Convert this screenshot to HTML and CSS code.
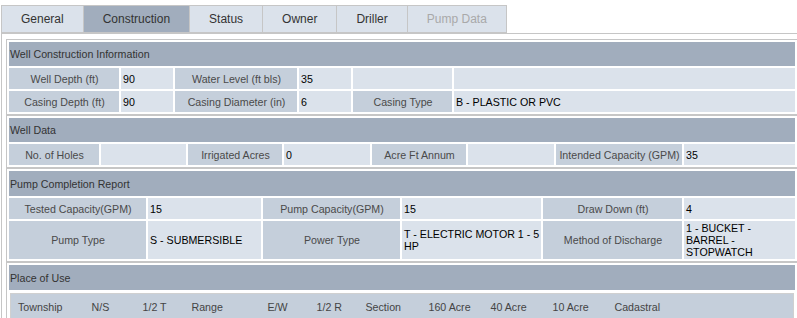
FILE: index.html
```html
<!DOCTYPE html>
<html lang="en">
<head>
    <meta charset="UTF-8">
    <meta name="viewport" content="width=device-width, initial-scale=1.0">
    <title>Well Construction</title>
    <link rel="stylesheet" href="styles.css">
</head>
<body>

<div class="tabs">
    <span class="tab">General</span>
    <span class="tab active">Construction</span>
    <span class="tab">Status</span>
    <span class="tab">Owner</span>
    <span class="tab">Driller</span>
    <span class="tab disabled">Pump Data</span>
</div>

<div class="panel">
    <table class="sect s1">
        <colgroup><col><col><col><col><col><col></colgroup>
        <tr><th class="head" colspan="6">Well Construction Information</th></tr>
        <tr>
            <td class="lbl">Well Depth (ft)</td><td class="val">90</td>
            <td class="lbl">Water Level (ft bls)</td><td class="val">35</td>
            <td class="val"></td><td class="val"></td>
        </tr>
        <tr>
            <td class="lbl">Casing Depth (ft)</td><td class="val">90</td>
            <td class="lbl">Casing Diameter (in)</td><td class="val">6</td>
            <td class="lbl">Casing Type</td><td class="val">B - PLASTIC OR PVC</td>
        </tr>
    </table>

    <table class="sect s2">
        <colgroup><col><col><col><col><col><col><col><col></colgroup>
        <tr><th class="head" colspan="8">Well Data</th></tr>
        <tr>
            <td class="lbl">No. of Holes</td><td class="val"></td>
            <td class="lbl">Irrigated Acres</td><td class="val">0</td>
            <td class="lbl">Acre Ft Annum</td><td class="val"></td>
            <td class="lbl">Intended Capacity (GPM)</td><td class="val">35</td>
        </tr>
    </table>

    <table class="sect s3">
        <colgroup><col><col><col><col><col><col></colgroup>
        <tr><th class="head" colspan="6">Pump Completion Report</th></tr>
        <tr>
            <td class="lbl">Tested Capacity(GPM)</td><td class="val">15</td>
            <td class="lbl">Pump Capacity(GPM)</td><td class="val">15</td>
            <td class="lbl">Draw Down (ft)</td><td class="val">4</td>
        </tr>
        <tr class="tall">
            <td class="lbl">Pump Type</td><td class="val">S - SUBMERSIBLE</td>
            <td class="lbl">Power Type</td><td class="val">T - ELECTRIC MOTOR 1 - 5 HP</td>
            <td class="lbl">Method of Discharge</td><td class="val">1 - BUCKET - BARREL - STOPWATCH</td>
        </tr>
    </table>

    <table class="sect s4">
        <tr><th class="head">Place of Use</th></tr>
        <tr>
            <td class="nest">
                <table class="use">
                    <colgroup><col><col><col><col><col><col><col><col><col><col><col></colgroup>
                    <tr>
                        <th>Township</th><th>N/S</th><th>1/2 T</th><th>Range</th><th>E/W</th><th>1/2 R</th>
                        <th>Section</th><th>160 Acre</th><th>40 Acre</th><th>10 Acre</th><th>Cadastral</th>
                    </tr>
                </table>
            </td>
        </tr>
    </table>
</div>

</body>
</html>
```

FILE: styles.css
```css
html, body {
    overflow: hidden;
}
body {
    margin: 0;
    padding: 5px 0 0 1px;
    font-family: "Liberation Sans", Arial, sans-serif;
    background-color: #fff;
    color: #333;
}

/* tabs */
.tabs {
    display: flex;
}
.tab {
    height: 26px;
    line-height: 26px;
    padding: 0 19px;
    font-size: 12px;
    color: #333;
    background-color: #dbe2eb;
    border: 1px solid #c6c6c6;
    border-left: none;
}
.tab:first-child {
    border-left: 1px solid #c6c6c6;
}
.tab.active {
    background-color: #a1adbd;
}
.tab.disabled {
    color: #a9a9a9;
}

/* panel */
.panel {
    width: 830px;
    padding: 5px 0 0 4px;
    border-top: 1px solid #c6c6c6;
    border-left: 1px solid #c6c6c6;
}
.sect {
    width: 792px;
    table-layout: fixed;
    border: 1px solid #c6c6c6;
    border-spacing: 2px;
    font-size: 8pt;
    line-height: 12px;
}
.sect td, .sect th {
    padding: 0 1px 0 2px;
    height: 21px;
    vertical-align: middle;
}
.sect .head {
    height: 24px;
    padding: 0 1px;
    text-align: left;
    font-weight: normal;
    color: #333;
    background-color: #a1adbd;
}
.s3 .head, .s4 .head {
    height: 25px;
}
.sect .tall td {
    height: 38px;
}
.lbl {
    text-align: center;
    color: #4a4a4a;
    background-color: #c5cfdb;
}
.val {
    color: #000;
    background-color: #dbe2eb;
}

/* column widths */
.s1 col:nth-child(1) { width: 110px; }
.s1 col:nth-child(2) { width: 52px; }
.s1 col:nth-child(3) { width: 122px; }
.s1 col:nth-child(4) { width: 52px; }
.s1 col:nth-child(5) { width: 99px; }

.s2 col:nth-child(1) { width: 90px; }
.s2 col:nth-child(2) { width: 85px; }
.s2 col:nth-child(3) { width: 94px; }
.s2 col:nth-child(4) { width: 86px; }
.s2 col:nth-child(5) { width: 94px; }
.s2 col:nth-child(6) { width: 86px; }
.s2 col:nth-child(7) { width: 126px; }

.s3 col:nth-child(1) { width: 137px; }
.s3 col:nth-child(2) { width: 113px; }
.s3 col:nth-child(3) { width: 137px; }
.s3 col:nth-child(4) { width: 139px; }
.s3 col:nth-child(5) { width: 139px; }

/* place of use */
.sect .nest {
    padding: 1px;
    background-color: #fff;
}
.use {
    width: 100%;
    table-layout: fixed;
    border-collapse: collapse;
    border: 1px solid #d0d0d0;
    background-color: #c5cfdb;
}
.use th {
    height: 26px;
    padding: 0 0 0 7px;
    text-align: left;
    font-weight: normal;
    color: #444;
}
.use col:nth-child(1) { width: 74px; }
.use col:nth-child(2) { width: 51px; }
.use col:nth-child(3) { width: 49px; }
.use col:nth-child(4) { width: 76px; }
.use col:nth-child(5) { width: 49px; }
.use col:nth-child(6) { width: 49px; }
.use col:nth-child(7) { width: 63px; }
.use col:nth-child(8) { width: 62px; }
.use col:nth-child(9) { width: 62px; }
.use col:nth-child(10) { width: 62px; }
```
